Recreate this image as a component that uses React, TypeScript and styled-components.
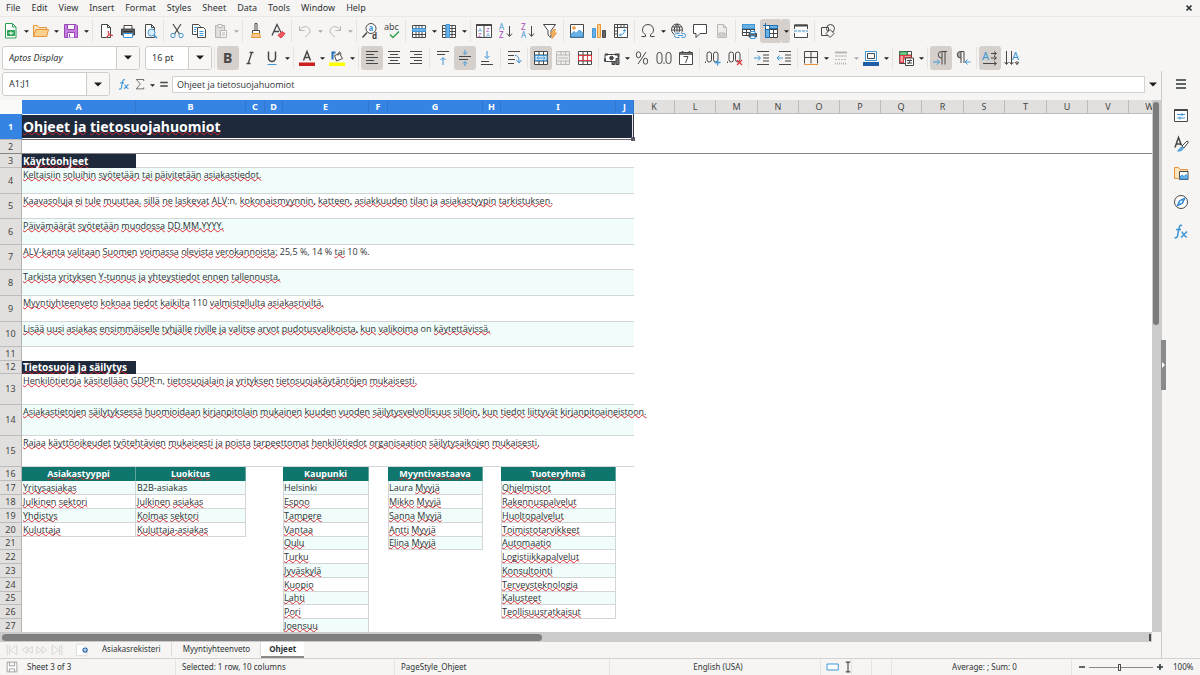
import React from "react";
import styled, { createGlobalStyle, css } from "styled-components";

const UI = '"Noto Sans", "Open Sans", sans-serif';
const CELL = '"Open Sans", "Noto Sans", sans-serif';
const INK = "#474747";
const BLUE = "#3d96d8";
const NAVY = "#1e293b";
const TEAL = "#0f766e";
const MINT = "#f0fdfa";
const LINE = "#d3d6d9";

const GlobalStyle = createGlobalStyle`
  * { box-sizing: border-box; }
  body { margin: 0; background: #f6f5f3; }
  button, input { font: inherit; color: inherit; margin: 0; padding: 0; border: 0; background: none; }
`;

/* ---------- shell ---------- */

const Window = styled.div`
  display: flex;
  flex-direction: column;
  height: 100vh;
  overflow: hidden;
  background: #f6f5f3;
  color: #2e3436;
  font-family: ${UI};
  font-size: 9px;
  line-height: 12px;
`;

const MenuBar = styled.nav`
  display: flex;
  align-items: center;
  gap: 1px;
  height: 17px;
  padding-left: 1px;
  flex: none;
  border-bottom: 1px solid #ebe9e7;
`;

const MenuItem = styled.button`
  padding: 0 5px;
`;

const CloseButton = styled.button`
  display: flex;
  margin-left: auto;
  padding: 0 7px;
`;

const Toolbar = styled.div`
  display: flex;
  align-items: center;
  height: 27px;
  flex: none;
`;

const ToolButton = styled.button<{ $active?: boolean; $dim?: boolean }>`
  display: flex;
  align-items: center;
  justify-content: center;
  width: 22px;
  height: 24px;
  flex: none;
  border-radius: 3px;
  background: ${(p) => (p.$active ? "#d5d0cc" : "transparent")};
  opacity: ${(p) => (p.$dim ? 0.35 : 1)};
`;

const ArrowButton = styled.button<{ $active?: boolean; $dim?: boolean }>`
  display: flex;
  align-items: center;
  justify-content: center;
  width: 8px;
  height: 24px;
  padding-top: 2px;
  flex: none;
  border-radius: 0 3px 3px 0;
  background: ${(p) => (p.$active ? "#d5d0cc" : "transparent")};
  opacity: ${(p) => (p.$dim ? 0.35 : 1)};
`;

const Divider = styled.span`
  width: 1px;
  height: 22px;
  margin: 0 2px;
  flex: none;
  background: #e6e4e1;
`;

const Combo = styled.div<{ $width: number }>`
  display: flex;
  width: ${(p) => p.$width}px;
  height: 24px;
  margin-left: 2px;
  flex: none;
  overflow: hidden;
  border: 1px solid #d0cdc9;
  border-radius: 3px;
  background: #fff;
`;

const ComboInput = styled.input<{ $italic?: boolean }>`
  flex: 1;
  min-width: 0;
  padding-left: 6px;
  font-style: ${(p) => (p.$italic ? "italic" : "normal")};
`;

const ComboArrow = styled.button`
  display: flex;
  align-items: center;
  justify-content: center;
  width: 23px;
  border-left: 1px solid #d0cdc9;
  background: #f8f7f6;
`;

const Gap = styled.span`
  width: 3px;
  flex: none;
`;

const Body = styled.div`
  display: flex;
  flex: 1;
  min-height: 0;
`;

const Workspace = styled.main`
  display: flex;
  flex-direction: column;
  flex: 1;
  min-width: 0;
`;

const FormulaBar = styled.div`
  display: flex;
  align-items: center;
  height: 26px;
  margin-bottom: 3px;
  flex: none;
`;

const FormulaButton = styled.button`
  display: flex;
  align-items: center;
  justify-content: center;
  width: 16px;
  height: 20px;
  flex: none;
`;

const FormulaInput = styled.input`
  flex: 1;
  min-width: 0;
  height: 17px;
  padding: 0 4px;
  border: 1px solid #d4d2cf;
  background: #fff;
  font-family: ${CELL};
`;

const Expand = styled.button`
  display: flex;
  align-items: center;
  justify-content: center;
  width: 16px;
  height: 20px;
`;

const Sidebar = styled.aside`
  position: relative;
  display: flex;
  flex-direction: column;
  align-items: center;
  width: 39px;
  flex: none;
  border-left: 1px solid #cfcdca;
`;

const SideButton = styled.button`
  display: flex;
  align-items: center;
  justify-content: center;
  width: 26px;
  height: 29px;
`;

const SideMenu = styled(SideButton)`
  height: 26px;
  margin-bottom: 3px;
`;

const SideHandle = styled.button`
  position: absolute;
  left: -1px;
  top: 50%;
  display: flex;
  align-items: center;
  justify-content: center;
  width: 5px;
  height: 50px;
  margin-top: -25px;
  background: #8a8a8a;
`;

/* ---------- sheet ---------- */

const SheetArea = styled.div`
  display: flex;
  flex: 1;
  min-height: 0;
`;

const GridView = styled.div`
  flex: 1;
  min-width: 0;
  overflow: hidden;
  background: #fff;
`;

const Grid = styled.table`
  table-layout: fixed;
  width: 0;
  border-collapse: separate;
  border-spacing: 0;
  font-family: ${CELL};
  font-size: 9px;
  line-height: 12px;
`;

const Row = styled.tr<{ $height: number; $frozen?: boolean }>`
  height: ${(p) => p.$height}px;
  ${(p) =>
    p.$frozen &&
    css`
      & > td, & > th { border-bottom: 1px solid #858585; }
    `}
`;

const headCell = css<{ $selected?: boolean }>`
  padding: 0;
  font-family: ${UI};
  font-size: 9px;
  font-weight: ${(p) => (p.$selected ? 700 : 400)};
  color: ${(p) => (p.$selected ? "#fff" : "#454545")};
  background: ${(p) => (p.$selected ? "#3584e4" : "#e1e0de")};
`;

const ColHead = styled.th<{ $selected?: boolean }>`
  ${headCell}
  border-right: 1px solid ${(p) => (p.$selected ? "#2f76cc" : "#bdbcba")};
  border-bottom: 1px solid ${(p) => (p.$selected ? "#3584e4" : "#bdbcba")};
`;

const RowHead = styled.th<{ $selected?: boolean }>`
  ${headCell}
  border-right: 1px solid ${(p) => (p.$selected ? "#2f76cc" : "#b4b3b1")};
  border-bottom: 1px solid #bdbcba;
`;

const Corner = styled.th`
  padding: 0;
  background: #fafaf9;
`;

const Cell = styled.td`
  padding: 0;
`;

const TitleCell = styled.td`
  position: relative;
  padding: 0 0 0 1px;
  background: ${NAVY};
  color: #fff;
  font-family: ${UI};
  font-size: 14px;
  font-weight: 700;
  line-height: 20px;
  border-bottom: 1px solid #6f6a75;
  border-right: 1px solid #33394a;
  box-shadow: inset 0 1px #fff, inset 0 -1px #fff, inset -1px 0 #e6e6ea;
`;

const FillHandle = styled.span`
  position: absolute;
  right: -2px;
  bottom: -2px;
  width: 4px;
  height: 4px;
  background: #5d5866;
`;

const SectionCell = styled.td`
  padding: 0 0 0 1px;
  background: ${NAVY};
  color: #fff;
  font-family: ${UI};
  font-size: 10px;
  font-weight: 700;
  white-space: nowrap;
  border-bottom: 1px solid ${NAVY};
`;

const RuledCell = styled.td`
  padding: 0;
  border-bottom: 1px solid ${LINE};
`;

const NoteCell = styled.td<{ $fill: boolean }>`
  padding: 1px 0 0 1px;
  vertical-align: top;
  white-space: nowrap;
  background: ${(p) => (p.$fill ? MINT : "#fff")};
  border-bottom: 1px solid ${LINE};
`;

const ListHead = styled.td`
  padding: 0;
  text-align: center;
  font-family: ${UI};
  font-weight: 700;
  color: #fff;
  background: ${TEAL};
  border-right: 1px solid #5fa39d;
`;

const ListCell = styled.td<{ $fill: boolean; $edge: boolean }>`
  padding: 0 0 0 1px;
  white-space: nowrap;
  background: ${(p) => (p.$fill ? MINT : "#fff")};
  border-right: 1px solid ${LINE};
  border-bottom: 1px solid ${LINE};
  box-shadow: ${(p) => (p.$edge ? `inset 1px 0 ${LINE}` : "none")};
`;

const Misspelt = styled.span`
  text-decoration: underline wavy #d8262c 1px;
  text-underline-offset: -1px;
  text-decoration-skip-ink: none;
`;

const VScroll = styled.div`
  width: 9px;
  flex: none;
  padding: 2px 2px 0 1px;
  background: #cbcbcb;
`;

const VThumb = styled.div`
  height: 42%;
  border-radius: 3px;
  background: #7b7b7b;
`;

const HScroll = styled.div`
  display: flex;
  align-items: center;
  justify-content: space-between;
  height: 10px;
  margin-right: 9px;
  padding: 0 1px 0 2px;
  flex: none;
  background: #cbcbcb;
`;

const HThumb = styled.div`
  width: 47%;
  height: 7px;
  border-radius: 4px;
  background: #7f7f7f;
`;

const HEnd = styled.div`
  width: 2px;
  height: 7px;
  background: #4a4a4a;
`;

const TabBar = styled.div`
  display: flex;
  height: 16px;
  padding-left: 5px;
  flex: none;
  font-size: 8px;
`;

const NavButton = styled.button`
  display: flex;
  align-items: center;
  width: 15px;
`;

const AddSheet = styled.button`
  display: flex;
  align-items: center;
  width: 16px;
  margin-left: 10px;
`;

const Tab = styled.button<{ $current?: boolean }>`
  padding: 0 ${(p) => (p.$current ? 8 : 11)}px;
  font-weight: ${(p) => (p.$current ? 700 : 400)};
  background: ${(p) => (p.$current ? "#fff" : "transparent")};
  border-bottom: 2px solid ${(p) => (p.$current ? "#8c8a88" : "transparent")};
  box-shadow: ${(p) => (p.$current ? "none" : "inset -1px 0 #dcdad7")};
`;

const StatusBar = styled.footer`
  display: grid;
  grid-template-columns: 175fr 219fr 215fr 211fr 31px 20px 20px 180fr 129px;
  height: 17px;
  flex: none;
  border-top: 1px solid #d3d1ce;
  font-size: 8px;
`;

const StatusField = styled.div<{ $center?: boolean }>`
  display: flex;
  align-items: center;
  justify-content: ${(p) => (p.$center ? "center" : "flex-start")};
  gap: 3px;
  padding-left: 6px;
  white-space: nowrap;
  border-left: 1px solid #e6e4e1;
  &:first-child { border-left: 0; gap: 9px; }
`;

const ZoomButton = styled.button`
  display: flex;
  align-items: center;
`;

const ZoomSlider = styled.input`
  appearance: none;
  width: 64px;
  height: 9px;
  background: linear-gradient(#8a8a8a, #8a8a8a) center / 100% 1px no-repeat;
  &::-webkit-slider-thumb {
    appearance: none;
    width: 3px;
    height: 7px;
    border: 1px solid #4d4d4d;
    background: #f6f5f3;
  }
`;

const ZoomValue = styled.button`
  margin-left: 6px;
`;

/* ---------- icons ---------- */

const Svg = styled.svg`
  flex: none;
  overflow: visible;
`;

const Glyph = ({ x, y, size, color = INK, bold, children }: any) => (
  <text x={x} y={y} fontSize={size} fill={color} stroke="none" fontWeight={bold ? 700 : 400} fontFamily="Noto Sans, sans-serif">
    {children}
  </text>
);

const doc = "M3.5 1.5h6l3 3v10h-9zM9.5 1.5v3h3";
const gridLines = "M1.5 2.5h13v12h-13zM1.5 5.5h13M1.5 8.5h13M1.5 11.5h13M5 2.5v12M8 2.5v12M11 2.5v12";

const icons: Record<string, React.ReactNode> = {
  new: (
    <g stroke="#2fa155">
      <path d="M2.500 .5h7l3.500 3.500v11h-10.500zM9.500 .5v3.500h3.500" fill="#fff" />
      <path d="M4.500 7.500h7v5h-7z" fill="#2fa155" />
      <path d="M5.500 10h5M8 8.500v3.500" stroke="#fff" />
    </g>
  ),
  open: (
    <g stroke="#e8943a">
      <path d="M.5 13.500v-11h4l1.500 2h7.500v3" fill="#fbe3bd" />
      <path d="M.5 13.500l2.500-7h12.500l-1.800 7z" fill="#fad08c" />
    </g>
  ),
  save: (
    <g stroke="#9a45b8">
      <path d="M1.500 1.500h11.500l1.500 1.500v11.500h-13z" fill="#c57fdd" />
      <path d="M4.500 1.500h7v5h-7zM4.500 14.500v-5h7v5" fill="#fff" />
      <path d="M6.500 11v3" />
    </g>
  ),
  pdf: (
    <g>
      <path d={doc} fill="#fff" />
      <path d="M8.500 14.500c2-2 2.500-5 1.800-6.500-.8 1.200 1.500 5 4.700 4.500-1.500-1-5-.3-6.500 2z" stroke="#e2383f" />
    </g>
  ),
  print: (
    <g>
      <path d="M4 6V2.500h8V6" fill="#fff" />
      <path d="M1.500 6h13v6h-13z" fill="#5b6066" />
      <path d="M3.500 10.500h9v4h-9z" fill="#fff" stroke={BLUE} />
      <path d="M3 8.500h10" stroke="#2e3436" />
    </g>
  ),
  preview: (
    <g>
      <path d={doc} fill="#fff" />
      <circle cx="9.500" cy="9.500" r="3.500" fill="#d9ecfa" stroke={BLUE} />
      <path d="M12 12l3 3" stroke={BLUE} strokeWidth="1.500" />
    </g>
  ),
  cut: (
    <g>
      <path d="M4 1l6.500 10M12 1L5.500 11" strokeWidth="1.200" />
      <circle cx="4" cy="12.500" r="2.200" stroke={BLUE} />
      <circle cx="12" cy="12.500" r="2.200" stroke={BLUE} />
    </g>
  ),
  copy: (
    <g fill="#fff">
      <path d="M1.500 1.500h6l2 2v8h-8z" />
      <path d="M6.500 4.500h6l2 2v8h-8z" />
      <path d="M3 4.500h3M3 6.500h2M3 8.500h2M8.500 8.500h4M8.500 10.500h4M8.500 12.500h4" stroke={BLUE} />
    </g>
  ),
  paste: (
    <g>
      <path d="M2.500 2.500h9v12h-9z" fill="#b5b5b5" />
      <path d="M5 1.500h4v3H5z" fill="#fff" />
      <path d="M7.500 7.500h6v7h-6z" fill="#fff" />
      <path d="M9 10h3M9 12h3" />
    </g>
  ),
  brush: (
    <g>
      <path d="M7 .5h2v7H7zM4.500 7.500h7v3h-7z" fill="#fff" />
      <path d="M4.500 10.500h7l1 4h-9z" fill="#fbc98c" stroke="#e8943a" />
    </g>
  ),
  clear: (
    <g>
      <path d="M2 12.500L7 1.500l4 8M4 8.500h5" strokeWidth="1.300" />
      <path d="M8 12.500l4-4 3 2-4 4.500z" fill="#ea5a60" stroke="#e2383f" />
    </g>
  ),
  undo: <path d="M2.500 3v4.500h5M2.500 7.500C5 3.500 9 2.500 11.500 5s2 5-3.500 9" />,
  redo: <path d="M13.500 3v4.500h-5M13.500 7.500C11 3.500 7 2.500 4.500 5s-2 5 3.500 9" />,
  find: (
    <g>
      <circle cx="9" cy="5.500" r="5" fill="#fff" />
      <path d="M5 9.500l-4.500 5" strokeWidth="1.500" />
      <Glyph x={6.500} y={8} size={8} color={BLUE} bold>a</Glyph>
      <Glyph x={10} y={15.500} size={8} bold>d</Glyph>
    </g>
  ),
  spell: (
    <g>
      <Glyph x={0} y={7} size={9}>abc</Glyph>
      <path d="M6 11.500l3 3 6-6" stroke="#2fa155" strokeWidth="1.500" />
    </g>
  ),
  rows: (
    <g>
      <path d={gridLines} fill="#fff" />
      <path d="M1.500 5.500h13v3h-13z" fill="#6bb1e6" stroke={BLUE} />
    </g>
  ),
  cols: (
    <g>
      <path d={gridLines} fill="#fff" />
      <path d="M5 1.500h3.500v13H5z" fill="#6bb1e6" stroke={BLUE} />
    </g>
  ),
  sort: (
    <g>
      <path d="M.5 1.500h15v13H.5zM8 1.500v13" fill="#fff" />
      <path d="M.5 2h15" strokeWidth="2" />
      <Glyph x={2} y={9} size={6} color={BLUE}>A</Glyph>
      <Glyph x={2} y={14} size={6} color="#a24bb8">Z</Glyph>
      <Glyph x={10} y={9} size={6} color="#a24bb8">Z</Glyph>
      <Glyph x={10} y={14} size={6} color={BLUE}>A</Glyph>
    </g>
  ),
  asc: (
    <g>
      <Glyph x={1} y={7} size={8} color={BLUE}>A</Glyph>
      <Glyph x={1} y={15} size={8} color="#a24bb8">Z</Glyph>
      <path d="M11.500 3v10M9 10.500l2.500 3 2.500-3" />
    </g>
  ),
  desc: (
    <g>
      <Glyph x={1} y={7} size={8} color="#a24bb8">Z</Glyph>
      <Glyph x={1} y={15} size={8} color={BLUE}>A</Glyph>
      <path d="M11.500 3v10M9 10.500l2.500 3 2.500-3" />
    </g>
  ),
  filter: (
    <g>
      <path d="M1.500 1.500h12l-4.500 6v7l-3-2.500V7.500z" fill="#fff" />
      <path d="M11.500 6.500l-3 5h3l-1.500 4 4.500-5.500h-3l2-3.500z" fill="#fbc06e" stroke="#e8943a" />
    </g>
  ),
  image: (
    <g>
      <path d="M1.500 1.500h13v13h-13z" fill="#fff" />
      <path d="M2 14v-2.500l3-3 2 2 3.500-3.500 3.500 3.500V14z" fill="#6bb1e6" stroke={BLUE} />
      <circle cx="5" cy="5" r="1.300" fill="#fbc06e" stroke="#e8943a" />
    </g>
  ),
  chart: (
    <g>
      <path d="M1.500 5.500h3v9h-3z" fill="#6bb1e6" stroke={BLUE} />
      <path d="M6.500 1.500h3v13h-3z" fill="#fbd08c" stroke="#e8943a" />
      <path d="M11.500 7.500h3v7h-3z" fill="#666" />
    </g>
  ),
  pivot: (
    <g>
      <path d="M1.500 1.500h13v13h-13zM1.500 4.500h13M4.500 1.500v13M1.500 8h3M1.500 11h3M8 1.500v3M11 1.500v3" fill="#fff" />
      <path d="M11.500 6.500c0 4-1.500 5.500-5 5.500M10 8l1.500-1.500L13 8M8 10.500L6.500 12 8 13.500" stroke={BLUE} />
    </g>
  ),
  omega: <path d="M1.500 13.500h4v-2C3.500 10.500 2.500 9 2.500 6.800c0-3 2.300-5.300 5.500-5.300s5.500 2.300 5.500 5.300c0 2.200-1 3.700-3 4.700v2h4" />,
  link: (
    <g>
      <circle cx="7" cy="6.500" r="5.500" fill="#fff" />
      <path d="M2 4h10M1.500 7h11M7 1v11M7 1c-3.500 3-3.500 8 0 11M7 1c3.500 3 3.500 8 0 11" />
      <path d="M4 9.500h12v5.500H4z" fill="#f6f5f3" stroke="none" />
      <path d="M9.500 10.500h-3a2 2 0 000 4h3M11.500 10.500h2a2 2 0 010 4h-2M8 12.500h5" stroke={BLUE} />
    </g>
  ),
  comment: <path d="M1.500 1.500h13v9H8l-4 4v-4H1.500z" fill="#fff" />,
  header: (
    <g>
      <path d={doc} fill="#ddd" />
      <path d="M5 10h6v3H5z" fill="#999" />
    </g>
  ),
  printarea: (
    <g>
      <path d="M1.500 1.500h12v11h-12zM1.500 6.500h12M1.500 9.500h12M5.500 1.500v11M9.500 1.500v11" fill="#fff" />
      <path d="M1.500 1.500h12v4h-12z" fill="#6bb1e6" stroke={BLUE} />
      <path d="M8 10.500h7.500v3.500H8z" fill="#5b6066" />
      <path d="M9.500 8.500h4.500v2H9.500zM9.500 13h4.500v2.500H9.500z" fill="#fff" stroke={BLUE} />
    </g>
  ),
  freeze: (
    <g>
      <path d="M2.500 2.500h12v12h-12zM2.500 6.500h12M2.500 10.500h12M6.500 2.500v12M10.500 2.500v12" fill="#fff" />
      <path d="M2.500 6.500h4v8h-4zM6.500 2.500h8v3h-8z" fill="#6bb1e6" stroke="#1f6fb5" />
      <path d="M0 2.500h5M2.500 0v5" stroke="#1f6fb5" />
    </g>
  ),
  split: (
    <g>
      <path d="M1.500 6v-4h13v4M1.500 10v4.500h13V10" fill="#fff" />
      <path d="M1.500 2.500h13" strokeWidth="2" />
      <path d="M1 8h14" stroke={BLUE} strokeDasharray="3 1" />
    </g>
  ),
  shapes: (
    <g>
      <circle cx="10.500" cy="5.500" r="4" />
      <path d="M1.500 4.500h7v8h-7z" />
      <path d="M10 6.500l4 4-4 4-4-4z" fill="#f6f5f3" />
    </g>
  ),
  bold: <Glyph x={3} y={13} size={14} bold>B</Glyph>,
  italic: <path d="M7.500 2.500h4M4.500 13.500h4M9.800 2.500L6.200 13.500" strokeWidth="1.300" />,
  underline: (
    <g>
      <path d="M4.500 1.500v6.500a3.500 3.500 0 007 0V1.500" strokeWidth="1.500" />
      <path d="M3.500 14.500h9" stroke={BLUE} />
    </g>
  ),
  fontcolor: (
    <g>
      <path d="M4.500 10.500L8 1.500l3.500 9M5.500 7.500h5" strokeWidth="1.500" />
      <path d="M0 12.500h16v3.500H0z" fill="#c9211e" stroke="none" />
    </g>
  ),
  fill: (
    <g>
      <path d="M5.500 5.500l5-2 3 5-6 2.500z" fill="#fff" />
      <path d="M9 5.500c0-4 2.500-5 3-1" />
      <path d="M3.500 9.500V2.500h3" stroke="#1f6fb5" strokeWidth="2" />
      <path d="M0 12.500h16v3.500H0z" fill="#ffff00" stroke="none" />
    </g>
  ),
  left: <path d="M2 1.500h12M2 4.500h8M2 7.500h12M2 10.500h8M2 13.500h12" />,
  center: <path d="M2 1.500h12M4 4.500h8M2 7.500h12M4 10.500h8M2 13.500h12" />,
  right: <path d="M2 1.500h12M6 4.500h8M2 7.500h12M6 10.500h8M2 13.500h12" />,
  top: (
    <g>
      <path d="M2 1.500h12M2 4.500h8" />
      <path d="M8 15V8M5.500 10L8 7.500l2.500 2.500" stroke={BLUE} />
    </g>
  ),
  middle: (
    <g>
      <path d="M2 6.500h12M2 9.500h9" />
      <path d="M8 0v4M6 2.500l2 2 2-2M8 16v-4M6 13.500l2-2 2 2" stroke={BLUE} />
    </g>
  ),
  bottom: (
    <g>
      <path d="M2 11.500h8M2 14.500h12" />
      <path d="M8 1v7M5.500 6L8 8.500 10.500 6" stroke={BLUE} />
    </g>
  ),
  wrap: (
    <g>
      <path d="M2 1.500h12M2 5.500h6M2 9.500h7M2 13.500h6" />
      <path d="M9 5.500c3 0 4 2 4 7M10.500 10l2.500 3 2.500-3" stroke={BLUE} />
    </g>
  ),
  merge: (
    <g>
      <path d="M1.500 1.500h13v13h-13zM1.500 5h13M1.500 11h13M6 1.500V5M10.500 1.500V5M6 11v3.500M10.500 11v3.500" fill="#fff" />
      <path d="M2 5.500h12v5H2z" fill="#cfe6f7" stroke={BLUE} />
      <path d="M4 8h8M5.500 6.500L4 8l1.500 1.500M10.500 6.500L12 8l-1.500 1.500" stroke={BLUE} />
    </g>
  ),
  mergecells: <path d="M1.500 1.500h13v13h-13zM1.500 5h13M1.500 11h13M6 1.500V5M10.500 1.500V5M6 11v3.500M10.500 11v3.500M3 8h10" fill="#ddd" />,
  unmerge: (
    <g>
      <path d="M1.500 1.500h13v13h-13zM1.500 5h13M1.500 11h13M6 1.500v13M10.500 1.500v13" fill="#fff" />
      <path d="M1.500 5.500h13v5h-13zM6 5.500v5M10.500 5.500v5" stroke="#e2383f" />
    </g>
  ),
  currency: (
    <g>
      <path d="M1 4.500h13.500v7H1z" fill="#fff" />
      <path d="M1 4.500h3M1 11.500v-3M11 4.500h3.500v3" strokeWidth="2" />
      <circle cx="7.500" cy="8" r="1.800" fill={INK} />
      <path d="M8 14.500v-3h3v3zM12 14.500V8.500h3v6z" fill="#777" />
    </g>
  ),
  percent: (
    <g>
      <ellipse cx="4.500" cy="4.800" rx="2.200" ry="3" />
      <ellipse cx="11.500" cy="11.200" rx="2.200" ry="3" />
      <path d="M12 2L4 14" />
    </g>
  ),
  number: (
    <g>
      <rect x="1" y="2.500" width="5" height="11" rx="2.500" />
      <rect x="10" y="2.500" width="5" height="11" rx="2.500" />
      <path d="M8 12.500v1.500" />
    </g>
  ),
  date: (
    <g>
      <path d="M1.500 2.500h13v12h-13z" fill="#fff" />
      <path d="M1.500 4h13M4.500 1v2M11.500 1v2" strokeWidth="1.500" />
      <path d="M5.500 6.500h4.500L7.500 13" />
    </g>
  ),
  adddec: (
    <g>
      <rect x="2" y="2" width="4.500" height="10" rx="2.200" />
      <rect x="8.500" y="2" width="4.500" height="10" rx="2.200" />
      <path d="M.5 11.500v1.500" />
      <path d="M9.500 12.500h6M12.500 9.500v6" stroke={BLUE} strokeWidth="1.300" />
    </g>
  ),
  remdec: (
    <g>
      <rect x="2" y="2" width="4.500" height="10" rx="2.200" />
      <rect x="8.500" y="2" width="4.500" height="10" rx="2.200" />
      <path d="M.5 11.500v1.500" />
      <path d="M10 10l5 5M15 10l-5 5" stroke="#e2383f" strokeWidth="1.300" />
    </g>
  ),
  indent: (
    <g>
      <path d="M3 1.500h12M9 5h6M9 8h6M9 11h6M3 14.500h12" />
      <path d="M0 8h6M4 5.500L6.500 8 4 10.500" stroke={BLUE} />
    </g>
  ),
  outdent: (
    <g>
      <path d="M3 1.500h12M9 5h6M9 8h6M9 11h6M3 14.500h12" />
      <path d="M7 8H1M3.500 5.500L1 8l2.500 2.500" stroke={BLUE} />
    </g>
  ),
  borders: (
    <g>
      <path d="M1.500 1.500v12M14.500 1.500v12M1.500 1.500h13M8 1.500v12M1.500 7.500h13" fill="#fff" />
      <path d="M1 14.500h14" stroke="#e8943a" />
    </g>
  ),
  linestyle: (
    <g>
      <path d="M2 2.500h12" strokeWidth="2" />
      <path d="M2 6h12" />
      <path d="M2 9.500h12" strokeDasharray="2 1" />
      <path d="M2 13.500h12" strokeDasharray="1 1" strokeWidth="2" />
    </g>
  ),
  bordercolor: (
    <g>
      <path d="M2.500 1.500h11v9h-11z" fill="#fff" stroke={BLUE} />
      <path d="M4.500 3.500h7v5h-7z" />
      <path d="M0 12h16v4H0z" fill="#1f5fa8" stroke="none" />
    </g>
  ),
  conditional: (
    <g>
      <path d="M1.500 1.500h12v12h-12zM1.500 5h12M1.500 9h12M5.500 1.500v12M9.500 1.500v12" fill="#fff" />
      <path d="M2 2h7v3H2z" fill="#7fd197" stroke="#2fa155" />
      <path d="M2 5.500h3.500v7H2zM6 5.500h7v2H6z" fill="#f3a0a3" stroke="#e2383f" />
      <path d="M7.500 8h8v7.500h-8z" fill="#fff" />
      <path d="M9 10.500h5M9 13h5M12.500 9.500l-2 4.500" />
    </g>
  ),
  ltr: (
    <g>
      <path d="M14 1.500H8.500a3 3 0 000 6.500H9M9 1.500v13M12 1.500v13" />
      <path d="M0 12h6M4 9.500L6.500 12 4 14.500" stroke={BLUE} />
    </g>
  ),
  rtl: (
    <g>
      <path d="M9 1.500H5.500a3 3 0 000 6.500H6V1.500M6 8v5M9 1.500V13" fill="#aaa" />
      <path d="M15.500 12h-5M12.500 9.500L10 12l2.500 2.500" stroke={BLUE} />
    </g>
  ),
  horiz: (
    <g>
      <Glyph x={0} y={10} size={11} color={BLUE}>A</Glyph>
      <path d="M9 3.500h5M12 1.500l2.500 2-2.500 2M9 8h5M12 6l2.500 2-2.500 2M1 13.500h13M12 11.500l2.500 2-2.500 2" />
    </g>
  ),
  vert: (
    <g>
      <Glyph x={8} y={10} size={11} color={BLUE}>A</Glyph>
      <path d="M2.500 1v13M.5 12l2 2.500 2-2.500M7.500 1v13M5.500 12l2 2.500 2-2.500M13 11v3.500M11 12l2 2.500 2-2.500" />
    </g>
  ),
  fx: (
    <g stroke={BLUE}>
      <path d="M9 2.500C7 1.500 6.500 3 6 5.500L4.500 13c-.4 1.800-1.500 2.200-3 1.500M3 6.500h5" strokeWidth="1.500" />
      <path d="M8.500 9c2 0 2 5 5.500 5M14 8.500l-6 6" strokeWidth="1.500" />
    </g>
  ),
  sum: <path d="M13 4V2H3l5.500 6L3 14.500h10v-2" />,
  equals: <path d="M3 6h10M3 10.500h10" strokeWidth="2" />,
  menu: <path d="M3 4h10M3 8h10M3 12h10" stroke="#2e3436" strokeWidth="1.500" />,
  properties: (
    <g>
      <path d="M1.500 2.500h13v12h-13z" fill="#fff" />
      <path d="M1.500 3h13" strokeWidth="2" />
      <path d="M4 7.500h8M4 11h8M9 6v3M7 9.500v3" stroke={BLUE} />
    </g>
  ),
  styles: (
    <g>
      <path d="M2 11.500L5.500 1.500l3 8M3 8h5" strokeWidth="1.500" />
      <path d="M9 10l5-5 1.500 1L11 12z" fill="#fff" />
      <path d="M4.500 15c2-.5 2-4 5-4 2 2-1 4.500-5 4z" fill="#6bb1e6" stroke={BLUE} />
    </g>
  ),
  gallery: (
    <g>
      <path d="M1.500 13.500v-11h4l1.500 2h7.500v9z" fill="#fbe3bd" stroke="#e8943a" />
      <path d="M6.500 6.500h8.500v8H6.500z" fill="#fff" />
      <path d="M7 14v-2l2-2 2 1.500 2-2 1.500 1.500V14z" fill="#6bb1e6" stroke={BLUE} />
    </g>
  ),
  navigator: (
    <g>
      <circle cx="8" cy="8" r="6.500" fill="#fff" />
      <path d="M12 4L9.500 9.500 4 12l2.500-5.500z" fill="#6bb1e6" stroke="#1f7cc9" />
      <circle cx="8" cy="8" r="1" fill="#fff" stroke="none" />
    </g>
  ),
  first: <path d="M2.500 2v12M13.500 2.500L6 8l7.500 5.500zM5 2.500v11" />,
  prev: <path d="M8 4L2.500 8 8 12zM14 4L8.500 8 14 12z" />,
  next: <path d="M2 4l5.500 4L2 12zM8 4l5.500 4L8 12z" />,
  last: <path d="M13.500 2v12M2.500 2.500L10 8l-7.500 5.500zM11 2.500v11" />,
  addsheet: (
    <g>
      <path d="M1.500 1.500h8l4 4v9h-12z" fill="#fff" stroke="#dad8d5" />
      <circle cx="11.500" cy="8" r="3" fill="#1f5fa8" stroke="none" />
      <path d="M9.500 8h4M11.500 6v4" stroke="#fff" />
    </g>
  ),
  modified: <path d="M1.500 1.500h13v13h-13zM4.500 1.500v5h7v-5M4.500 14.500v-4h7v4" stroke="#8a8a8a" fill="#fff" />,
  selmode: <path d="M0 4h15v8H0z" stroke={BLUE} strokeWidth="1.300" fill="#fff" />,
  cursor: <path d="M5 1.500h6M8 1.500v13M5 14.500h6" strokeWidth="1.500" />,
  minus: <path d="M2 8h12" stroke="#2e3436" strokeWidth="3" />,
  plus: <path d="M2 8h12M8 2v12" stroke="#2e3436" strokeWidth="3" />,
  close: <path d="M3 3l10 10M13 3L3 13" stroke="#2e3436" strokeWidth="3.500" />,
};

const Icon = ({ name, size = 16, color = INK }: { name: string; size?: number; color?: string }) => (
  <Svg width={size} height={size} viewBox="0 0 16 16" fill="none" stroke={color} aria-hidden="true">
    {icons[name]}
  </Svg>
);

const Caret = ({ wide }: { wide?: boolean }) => (
  <Svg width={wide ? 8 : 5} height={wide ? 5 : 3} viewBox="0 0 8 4" aria-hidden="true">
    <path d="M0 0h8L4 4z" fill="#1c1c1c" />
  </Svg>
);

/* ---------- toolbars ---------- */

type Tool = { icon: string; label: string; menu?: boolean; active?: boolean; dim?: boolean } | null;

const t = (icon: string, label: string, flags = ""): Tool => ({
  icon,
  label,
  menu: flags.includes("m"),
  active: flags.includes("a"),
  dim: flags.includes("d"),
});

const standardTools: Tool[] = [
  t("new", "New", "m"), t("open", "Open", "m"), t("save", "Save", "m"), null,
  t("pdf", "Export as PDF"), t("print", "Print"), t("preview", "Print Preview"), null,
  t("cut", "Cut"), t("copy", "Copy"), t("paste", "Paste", "md"), null,
  t("brush", "Clone Formatting"), t("clear", "Clear Direct Formatting"), null,
  t("undo", "Undo", "md"), t("redo", "Redo", "md"), null,
  t("find", "Find and Replace"), t("spell", "Spelling"), null,
  t("rows", "Row", "m"), t("cols", "Column", "m"), null,
  t("sort", "Sort"), t("asc", "Sort Ascending"), t("desc", "Sort Descending"), t("filter", "AutoFilter"), null,
  t("image", "Insert Image"), t("chart", "Insert Chart"), t("pivot", "Insert Pivot Table"), null,
  t("omega", "Special Character", "m"), t("link", "Insert Hyperlink"), t("comment", "Insert Comment"), t("header", "Headers and Footers", "d"), null,
  t("printarea", "Define Print Area"), t("freeze", "Freeze Rows and Columns", "ma"), t("split", "Split Window"), null,
  t("shapes", "Show Draw Functions"),
];

const formatTools: Tool[] = [
  t("bold", "Bold", "a"), t("italic", "Italic"), t("underline", "Underline", "m"), null,
  t("fontcolor", "Font Color", "m"), t("fill", "Background Color", "m"), null,
  t("left", "Align Left", "a"), t("center", "Center Horizontally"), t("right", "Align Right"), null,
  t("top", "Align Top"), t("middle", "Center Vertically", "a"), t("bottom", "Align Bottom"), null,
  t("wrap", "Wrap Text"), null,
  t("merge", "Merge and Center Cells", "a"), t("mergecells", "Merge Cells", "d"), t("unmerge", "Unmerge Cells"), null,
  t("currency", "Format as Currency", "m"), t("percent", "Format as Percent"), t("number", "Format as Number"), t("date", "Format as Date"), null,
  t("adddec", "Add Decimal Place"), t("remdec", "Delete Decimal Place"), null,
  t("indent", "Increase Indent"), t("outdent", "Decrease Indent"), null,
  t("borders", "Borders", "m"), t("linestyle", "Border Style", "md"), t("bordercolor", "Border Color", "m"), null,
  t("conditional", "Conditional Formatting", "m"), null,
  t("ltr", "Left-To-Right", "a"), t("rtl", "Right-To-Left"), null,
  t("horiz", "Text Direction Left to Right", "a"), t("vert", "Text Direction Top to Bottom"),
];

const Tools = ({ items }: { items: Tool[] }) => (
  <>
    {items.map((tool, i) =>
      tool ? (
        <React.Fragment key={tool.icon}>
          <ToolButton aria-label={tool.label} $active={tool.active} $dim={tool.dim}>
            <Icon name={tool.icon} />
          </ToolButton>
          {tool.menu && (
            <ArrowButton aria-label={tool.label + " options"} $active={tool.active} $dim={tool.dim}>
              <Caret />
            </ArrowButton>
          )}
        </React.Fragment>
      ) : (
        <Divider key={i} />
      )
    )}
  </>
);

/* ---------- sheet data ---------- */

const columns: [string, number][] = [
  ["A", 114], ["B", 110], ["C", 19], ["D", 18], ["E", 86], ["F", 19], ["G", 95], ["H", 18], ["I", 115], ["J", 18],
  ["K", 41], ["L", 41], ["M", 42], ["N", 41], ["O", 41], ["P", 41], ["Q", 41], ["R", 42], ["S", 41], ["T", 42],
  ["U", 41], ["V", 41], ["W", 42],
];
const USED = 10;

/* A leading "~" marks a word the spelling checker accepts. */
const notes: Record<number, string> = {
  4: "Keltaisiin soluihin syötetään tai päivitetään asiakastiedot.",
  5: "Kaavasoluja ei tule muuttaa, sillä ne laskevat ALV:n, kokonaismyynnin, katteen, asiakkuuden tilan ja asiakastyypin tarkistuksen.",
  6: "Päivämäärät syötetään muodossa DD.MM.YYYY.",
  7: "ALV-kanta valitaan Suomen voimassa olevista verokannoista: ~25,5 ~%, ~14 ~% tai ~10 ~%.",
  8: "Tarkista yrityksen Y-tunnus ja yhteystiedot ennen tallennusta.",
  9: "Myyntiyhteenveto kokoaa tiedot kaikilta ~110 valmistellulta asiakasriviltä.",
  10: "Lisää uusi asiakas ensimmäiselle tyhjälle riville ja valitse arvot pudotusvalikoista, kun valikoima ~on käytettävissä.",
  13: "Henkilötietoja käsitellään GDPR:n, tietosuojalain ja yrityksen tietosuojakäytäntöjen mukaisesti.",
  14: "Asiakastietojen säilytyksessä huomioidaan kirjanpitolain mukainen kuuden vuoden säilytysvelvollisuus silloin, kun tiedot liittyvät kirjanpitoaineistoon.",
  15: "Rajaa käyttöoikeudet työtehtävien mukaisesti ja poista tarpeettomat henkilötiedot organisaation säilytysaikojen mukaisesti.",
};
const sections: Record<number, string> = { 3: "Käyttöohjeet", 12: "Tietosuoja ja säilytys" };

const lists: Record<string, string[]> = {
  A: ["Asiakastyyppi", "Yritysasiakas", "Julkinen sektori", "Yhdistys", "Kuluttaja"],
  B: ["Luokitus", "~B2B-asiakas", "Julkinen asiakas", "Kolmas sektori", "Kuluttaja-asiakas"],
  E: ["Kaupunki", "~Helsinki", "Espoo", "Tampere", "Vantaa", "Oulu", "Turku", "Jyväskylä", "Kuopio", "Lahti", "Pori", "Joensuu"],
  G: ["Myyntivastaava", "~Laura Myyjä", "Mikko Myyjä", "Sanna Myyjä", "Antti Myyjä", "Elina Myyjä"],
  I: ["Tuoteryhmä", "Ohjelmistot", "Rakennuspalvelut", "Huoltopalvelut", "Toimistotarvikkeet", "Automaatio", "Logistiikkapalvelut", "Konsultointi", "Terveysteknologia", "Kalusteet", "Teollisuusratkaisut"],
};

const rowHeights = [
  26, 14, 14, 26, 25, 26, 25, 26, 26, 25, 14, 13, 31, 31, 31,
  14, 14, 14, 14, 14, 13, 14, 14, 14, 13, 14, 14,
];

const Spelled = ({ text }: { text: string }) => (
  <>
    {text.split(" ").map((word, i) => {
      const space = i ? " " : "";
      if (word[0] === "~") return space + word.slice(1);
      const cut = word.endsWith(":n,") ? word.length - 3 : word.length;
      return (
        <React.Fragment key={i}>
          {space}
          <Misspelt>{word.slice(0, cut)}</Misspelt>
          {word.slice(cut)}
        </React.Fragment>
      );
    })}
  </>
);

const rowCells = (n: number) => {
  if (n === 1)
    return (
      <TitleCell colSpan={USED}>
        <Spelled text="Ohjeet ja tietosuojahuomiot" />
        <FillHandle />
      </TitleCell>
    );
  if (sections[n])
    return (
      <>
        <SectionCell><Spelled text={sections[n]} /></SectionCell>
        <RuledCell colSpan={USED - 1} />
      </>
    );
  if (notes[n])
    return <NoteCell colSpan={USED} $fill={n % 2 === 0}><Spelled text={notes[n]} /></NoteCell>;
  if (n < 16) return <Cell colSpan={USED} />;
  return columns.slice(0, USED).map(([c]) => {
    const text = lists[c]?.[n - 16];
    if (!text) return <Cell key={c} />;
    return n === 16 ? (
      <ListHead key={c}><Spelled text={text} /></ListHead>
    ) : (
      <ListCell key={c} $fill={n % 2 === 1} $edge={c > "B"}><Spelled text={text} /></ListCell>
    );
  });
};

const Sheet = () => (
  <Grid aria-label="Ohjeet">
    <colgroup>
      <col width={22} />
      {columns.map(([c, w]) => <col key={c} width={w} />)}
    </colgroup>
    <thead>
      <Row $height={14}>
        <Corner />
        {columns.map(([c], i) => <ColHead key={c} scope="col" $selected={i < USED}>{c}</ColHead>)}
      </Row>
    </thead>
    <tbody>
      {rowHeights.map((h, i) => (
        <Row key={i} $height={h} $frozen={i === 1}>
          <RowHead scope="row" $selected={i === 0}>{i + 1}</RowHead>
          {rowCells(i + 1)}
          <Cell colSpan={columns.length - USED} />
        </Row>
      ))}
    </tbody>
  </Grid>
);

const menus = ["File", "Edit", "View", "Insert", "Format", "Styles", "Sheet", "Data", "Tools", "Window", "Help"];

export default function App() {
  return (
    <Window>
      <GlobalStyle />
      <MenuBar>
        {menus.map((m) => <MenuItem key={m}>{m}</MenuItem>)}
        <CloseButton aria-label="Close document"><Icon name="close" size={8} /></CloseButton>
      </MenuBar>
      <Toolbar role="toolbar" aria-label="Standard">
        <Tools items={standardTools} />
      </Toolbar>
      <Toolbar role="toolbar" aria-label="Formatting">
        <Combo $width={138}>
          <ComboInput aria-label="Font name" defaultValue="Aptos Display" $italic />
          <ComboArrow aria-label="Choose font"><Caret wide /></ComboArrow>
        </Combo>
        <Gap />
        <Combo $width={67}>
          <ComboInput aria-label="Font size" defaultValue="16 pt" />
          <ComboArrow aria-label="Choose size"><Caret wide /></ComboArrow>
        </Combo>
        <Divider />
        <Tools items={formatTools} />
      </Toolbar>
      <Body>
        <Workspace>
          <FormulaBar>
            <Combo $width={108}>
              <ComboInput aria-label="Name box" defaultValue="A1:J1" />
              <ComboArrow aria-label="Manage names"><Caret wide /></ComboArrow>
            </Combo>
            <Gap />
            <Gap />
            <FormulaButton aria-label="Function wizard"><Icon name="fx" size={12} /></FormulaButton>
            <FormulaButton aria-label="Select function"><Icon name="sum" size={12} /></FormulaButton>
            <ArrowButton aria-label="Function options"><Caret /></ArrowButton>
            <FormulaButton aria-label="Formula"><Icon name="equals" size={12} /></FormulaButton>
            <FormulaInput aria-label="Formula input" defaultValue="Ohjeet ja tietosuojahuomiot" />
            <Expand aria-label="Expand formula bar"><Caret wide /></Expand>
          </FormulaBar>
          <SheetArea>
            <GridView><Sheet /></GridView>
            <VScroll><VThumb /></VScroll>
          </SheetArea>
          <HScroll><HThumb /><HEnd /></HScroll>
          <TabBar>
            {["first", "prev", "next", "last"].map((n) => (
              <NavButton key={n} aria-label={n + " sheet"}>
                <Icon name={n} size={14} color="#d4d2cf" />
              </NavButton>
            ))}
            <AddSheet aria-label="Add sheet"><Icon name="addsheet" size={14} /></AddSheet>
            <Tab>Asiakasrekisteri</Tab>
            <Tab>Myyntiyhteenveto</Tab>
            <Tab $current>Ohjeet</Tab>
          </TabBar>
        </Workspace>
        <Sidebar>
          <SideMenu aria-label="Sidebar settings"><Icon name="menu" /></SideMenu>
          <SideButton aria-label="Properties"><Icon name="properties" /></SideButton>
          <SideButton aria-label="Styles"><Icon name="styles" /></SideButton>
          <SideButton aria-label="Gallery"><Icon name="gallery" /></SideButton>
          <SideButton aria-label="Navigator"><Icon name="navigator" /></SideButton>
          <SideButton aria-label="Functions"><Icon name="fx" /></SideButton>
          <SideHandle aria-label="Hide sidebar">
            <svg width="3" height="6" viewBox="0 0 3 6" aria-hidden="true"><path d="M0 0l3 3-3 3z" fill="#fff" /></svg>
          </SideHandle>
        </Sidebar>
      </Body>
      <StatusBar>
        <StatusField><Icon name="modified" size={12} />Sheet 3 of 3</StatusField>
        <StatusField>Selected: 1 row, 10 columns</StatusField>
        <StatusField>PageStyle_Ohjeet</StatusField>
        <StatusField $center>English (USA)</StatusField>
        <StatusField><Icon name="selmode" size={12} /><Icon name="cursor" size={12} /></StatusField>
        <StatusField />
        <StatusField />
        <StatusField $center>Average: ; Sum: 0</StatusField>
        <StatusField>
          <ZoomButton aria-label="Zoom out"><Icon name="minus" size={8} /></ZoomButton>
          <ZoomSlider type="range" aria-label="Zoom" min={0} max={100} defaultValue={48} />
          <ZoomButton aria-label="Zoom in"><Icon name="plus" size={8} /></ZoomButton>
          <ZoomValue>100%</ZoomValue>
        </StatusField>
      </StatusBar>
    </Window>
  );
}
